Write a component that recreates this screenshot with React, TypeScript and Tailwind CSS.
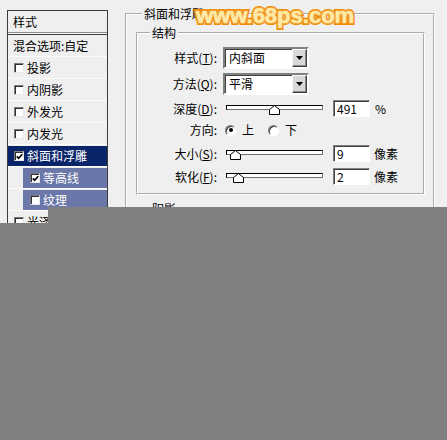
import React from 'react'

const font = "font-['Noto_Sans_CJK_SC','Noto_Sans_CJK_JP',sans-serif]"

function Check({ checked }: { checked?: boolean }) {
  return (
    <span className="w-[10px] h-[10px] shrink-0 bg-white border border-t-[#7a7a7a] border-l-[#7a7a7a] border-r-[#e8e8e8] border-b-[#e8e8e8] shadow-[inset_1px_1px_0_#303030] flex items-center justify-center">
      {checked && (
        <svg width="7" height="7" viewBox="0 0 7 7">
          <path d="M0.8 3.4 L2.6 5.3 L6.3 1.2" stroke="#000" strokeWidth="1.7" fill="none" />
        </svg>
      )}
    </span>
  )
}

function LayerRow({ label, checked, selected }: { label: string; checked?: boolean; selected?: boolean }) {
  return (
    <div className="h-[22px] py-[1px] border-t border-[#fbfbfb]">
      <div className={`h-[20px] flex items-center gap-[3px] pl-[6px] ${selected ? 'bg-[#0a246a] text-white' : ''}`}>
        <Check checked={checked} />
        <span>{label}</span>
      </div>
    </div>
  )
}

function SubRow({ label, checked }: { label: string; checked?: boolean }) {
  return (
    <div className="h-[22px] py-[1px] pl-[15px] border-t border-[#fbfbfb]">
      <div className="h-[20px] flex items-center gap-[3px] pl-[7px] bg-[#6b77a8] text-white">
        <Check checked={checked} />
        <span>{label}</span>
      </div>
    </div>
  )
}

function Select({ value }: { value: string }) {
  return (
    <div className="w-[86px] h-[22px] flex bg-white border-2 border-t-[#808080] border-l-[#808080] border-r-white border-b-white shadow-[inset_1px_1px_0_#404040]">
      <div className="flex-1 flex items-center pl-[4px]">{value}</div>
      <div className="w-[15px] h-full bg-[#d8d8d8] border border-t-[#f8f8f8] border-l-[#f8f8f8] border-r-[#404040] border-b-[#404040] shadow-[inset_-1px_-1px_0_#8a8a8a] flex items-center justify-center">
        <svg width="7" height="4" viewBox="0 0 7 4">
          <path d="M0 0 H7 L3.5 4 Z" fill="#000" />
        </svg>
      </div>
    </div>
  )
}

function Slider({ pos }: { pos: number }) {
  return (
    <div className="relative w-[97px] h-[10px]">
      <div className="mt-[3px] h-[5px] bg-white border border-black border-b-[#707070] border-r-[#707070]" />
      <svg className="absolute top-0" style={{ left: pos }} width="11" height="10" viewBox="0 0 11 10">
        <path d="M0.5 9.5 V4.5 L5.5 0.5 L10.5 4.5 V9.5 Z" fill="#fff" stroke="#000" />
      </svg>
    </div>
  )
}

function NumBox({ value }: { value: string }) {
  return (
    <div className="ml-[10px] w-[37px] h-[17px] bg-white border border-t-[#808080] border-l-[#808080] border-r-white border-b-white shadow-[inset_1px_1px_0_#404040] pl-[3px] flex items-center leading-none">
      {value}
    </div>
  )
}

function Radio({ on }: { on?: boolean }) {
  return (
    <span className="w-[11px] h-[11px] rounded-full bg-white border border-t-[#7a7a7a] border-l-[#7a7a7a] border-r-white border-b-white shadow-[inset_1px_1px_0_#404040] flex items-center justify-center">
      {on && <span className="w-[4px] h-[4px] rounded-full bg-black" />}
    </span>
  )
}

function Label({ children }: { children: React.ReactNode }) {
  return <div className="w-[80px] text-right pr-[1px]">{children}</div>
}

export default function App() {
  return (
    <div className={`relative w-[447px] h-[440px] overflow-hidden bg-[#efefef] text-black text-[12px] leading-[16px] ${font}`}>
      <div className="flex">
        {/* 样式 list */}
        <div className="ml-[7px] mt-[10px] w-[101px] h-[240px] border border-[#3c3c3c] bg-[#efefef]">
          <div className="h-[21px] flex items-center pl-[5px]">样式</div>
          <div className="h-[3px] border-y border-t-[#8a8a8a] border-b-[#404040] bg-[#f8f8f8]" />
          <div className="h-[21px] flex items-center pl-[5px]">混合选项:自定</div>
          <LayerRow label="投影" />
          <LayerRow label="内阴影" />
          <LayerRow label="外发光" />
          <LayerRow label="内发光" />
          <LayerRow label="斜面和浮雕" checked selected />
          <SubRow label="等高线" checked />
          <SubRow label="纹理" />
          <LayerRow label="光泽" />
        </div>

        {/* 斜面和浮雕 group */}
        <div className="ml-[17px] pt-[6px]">
          <fieldset className="w-[310px] h-[260px] border-2 border-white [--tw-border-style:groove]">
            <legend className="ml-[15px] px-[2px]">斜面和浮雕</legend>
            <fieldset className="ml-[9px] mt-[3px] w-[289px] border-2 border-white [--tw-border-style:groove] pb-[8px]">
              <legend className="ml-[12px] px-[2px]">结构</legend>
              <div className="pt-[6px] flex flex-col">
                <div className="h-[22px] flex items-center gap-[5px]">
                  <Label>样式(<u>T</u>):</Label>
                  <Select value="内斜面" />
                </div>
                <div className="mt-[4px] h-[22px] flex items-center gap-[5px]">
                  <Label>方法(<u>Q</u>):</Label>
                  <Select value="平滑" />
                </div>
                <div className="mt-[5px] h-[17px] flex items-center">
                  <Label>深度(<u>D</u>):</Label>
                  <div className="ml-[8px]"><Slider pos={43} /></div>
                  <NumBox value="491" />
                  <span className="ml-[5px]">%</span>
                </div>
                <div className="mt-[5px] h-[16px] flex items-center">
                  <Label>方向:</Label>
                  <div className="ml-[7px] flex items-center">
                    <Radio on />
                    <span className="ml-[6px]">上</span>
                    <span className="ml-[14px]"><Radio /></span>
                    <span className="ml-[6px]">下</span>
                  </div>
                </div>
                <div className="mt-[7px] h-[17px] flex items-center">
                  <Label>大小(<u>S</u>):</Label>
                  <div className="ml-[8px]"><Slider pos={4} /></div>
                  <NumBox value="9" />
                  <span className="ml-[4px]">像素</span>
                </div>
                <div className="mt-[6px] h-[17px] flex items-center">
                  <Label>软化(<u>F</u>):</Label>
                  <div className="ml-[8px]"><Slider pos={7} /></div>
                  <NumBox value="2" />
                  <span className="ml-[4px]">像素</span>
                </div>
              </div>
            </fieldset>
            <fieldset className="ml-[9px] mt-[6px] w-[289px] h-[50px] border-2 border-white [--tw-border-style:groove]">
              <legend className="ml-[12px] px-[2px]">阴影</legend>
            </fieldset>
          </fieldset>
        </div>
      </div>

      {/* watermark */}
      <div className="absolute left-[196px] top-[3px] font-['Liberation_Sans',sans-serif] font-bold text-[22px] leading-[26px] text-[#ffeaa0] [-webkit-text-stroke:4px_#f08a00] [paint-order:stroke_fill] [text-shadow:0_0_2px_#fff]">
        www.68ps.com
      </div>

      {/* grey cover */}
      <div className="absolute left-[48px] right-0 top-[207px] bottom-0 bg-[#808080]" />
      <div className="absolute left-0 w-[48px] top-[223px] bottom-0 bg-[#808080]" />
    </div>
  )
}
